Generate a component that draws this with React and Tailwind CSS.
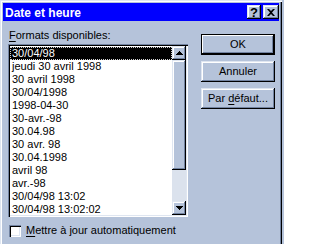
import React from "react";

const FACE = "bg-[#b5c3da]";

const formats = [
  "30/04/98",
  "jeudi 30 avril 1998",
  "30 avril 1998",
  "30/04/1998",
  "1998-04-30",
  "30-avr.-98",
  "30.04.98",
  "30 avr. 98",
  "30.04.1998",
  "avril 98",
  "avr.-98",
  "30/04/98 13:02",
  "30/04/98 13:02:02",
];

// raised 3d edge, win98 style
const raised =
  "shadow-[inset_-1px_-1px_#000,inset_1px_1px_#dfe6f1,inset_-2px_-2px_#7283a1,inset_2px_2px_#ffffff]";

function Arrow({ down }) {
  return (
    <svg width="7" height="4" viewBox="0 0 7 4" className={down ? "rotate-180" : ""}>
      <path d="M3 0h1v1h1v1h1v1h1v1H0V3h1V2h1V1h1z" fill="#000" />
    </svg>
  );
}

function ScrollBar() {
  return (
    <div className="flex flex-col w-[14px] h-full bg-[#dbe2ed]">
      <div className={`flex items-center justify-center h-[14px] ${FACE} ${raised}`}>
        <Arrow />
      </div>
      <div className={`h-[110px] ${FACE} ${raised}`} />
      <div className="flex-1" />
      <div className={`flex items-center justify-center h-[14px] ${FACE} ${raised}`}>
        <Arrow down />
      </div>
    </div>
  );
}

function FormatList({ selected }) {
  return (
    <div className="w-[180px] h-[173px] bg-white shadow-[inset_1px_1px_#7283a1,inset_2px_2px_#000,inset_-1px_-1px_#ffffff,inset_-2px_-2px_#dfe6f1] p-[2px] flex">
      <div className="flex-1 pt-px overflow-hidden">
        {formats.map((f, i) => (
          <div
            key={f}
            className={
              "h-[13px] leading-[13px] pl-[2px] whitespace-nowrap " +
              (i === selected
                ? "bg-black text-white outline-1 outline-dotted outline-[#d0d0d0] -outline-offset-1"
                : "text-black")
            }
          >
            {f}
          </div>
        ))}
      </div>
      <ScrollBar />
    </div>
  );
}

function DlgButton({ children, isDefault }) {
  return (
    <button
      type="button"
      className={
        `w-[74px] h-[21px] ${FACE} text-black text-[11px] leading-[13px] ` +
        (isDefault
          ? "shadow-[inset_-1px_-1px_#000,inset_1px_1px_#000,inset_-2px_-2px_#000,inset_2px_2px_#ffffff,inset_-3px_-3px_#7283a1]"
          : raised)
      }
    >
      {children}
    </button>
  );
}

function CaptionButton({ children, width }) {
  return (
    <div
      className={`${width} h-[14px] ${FACE} ${raised} flex items-center justify-center text-black font-bold text-[13px] leading-none`}
    >
      {children}
    </div>
  );
}

export default function App() {
  return (
    <div className={`w-[284px] h-[244px] overflow-hidden ${FACE} font-['Liberation_Sans',Arial,sans-serif] text-[11px]`}>
      <div
        className={`w-[282px] h-[260px] ${FACE} p-[3px] shadow-[inset_1px_1px_#dfe6f1,inset_2px_2px_#ffffff,inset_-1px_-1px_#000,inset_-2px_-2px_#7283a1]`}
      >
        {/* title bar */}
        <div className="h-[18px] bg-[#0000ff] flex items-center justify-between pl-[2px]">
          <span className="text-white font-bold text-[12px] leading-[18px] pt-px">Date et heure</span>
          <div className="flex gap-[2px]">
            <CaptionButton width="w-[14px]">
              <span className="-mb-px">?</span>
            </CaptionButton>
            <CaptionButton width="w-[16px]">
              <svg width="8" height="7" viewBox="0 0 8 7">
                <path d="M0 0h2l2 2 2-2h2L5 3.5 8 7H6L4 5 2 7H0l3-3.5z" fill="#000" />
              </svg>
            </CaptionButton>
          </div>
        </div>

        <div className="flex">
          <div className="ml-[5px] mt-[8px] flex flex-col">
            <label className="pl-px h-[13px] leading-[13px] text-black">
              <span className="underline underline-offset-[2px]">F</span>ormats disponibles:
            </label>
            <div className="mt-[2px]">
              <FormatList selected={0} />
            </div>
            <div className="mt-[7px] flex items-center gap-[4px] pl-[1px]">
              <div className="w-[12px] h-[12px] bg-white shadow-[inset_1px_1px_#7283a1,inset_2px_2px_#000,inset_-1px_-1px_#ffffff,inset_-2px_-2px_#dfe6f1]" />
              <span className="text-black leading-[13px] ml-[1px]">
                <span className="underline underline-offset-[2px]">M</span>ettre à jour automatiquement
              </span>
            </div>
          </div>

          <div className="ml-[13px] mt-[13px] flex flex-col gap-[6px]">
            <DlgButton isDefault>OK</DlgButton>
            <DlgButton>Annuler</DlgButton>
            <DlgButton>
              Par <span className="underline underline-offset-[2px]">d</span>éfaut...
            </DlgButton>
          </div>
        </div>
      </div>
    </div>
  );
}
